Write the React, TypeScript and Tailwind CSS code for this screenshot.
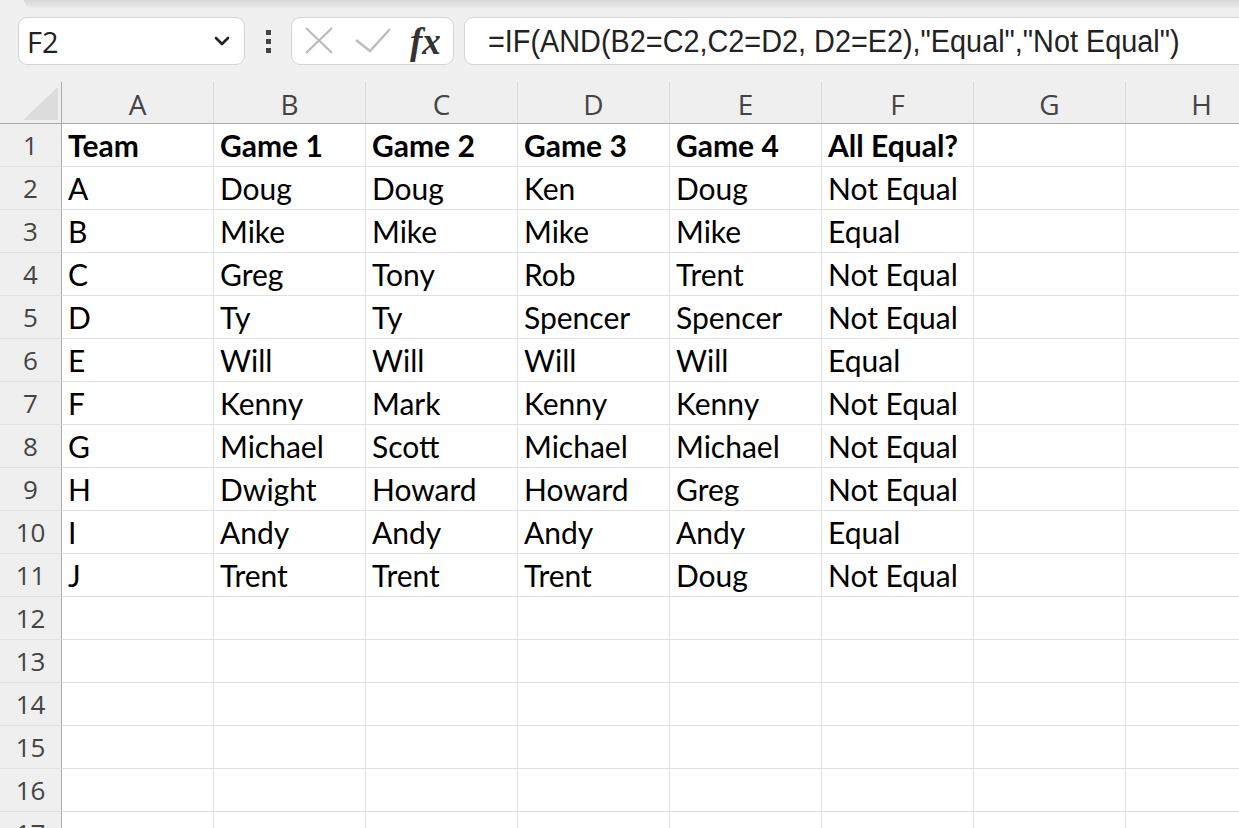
import { ChevronDown } from 'lucide-react';

const COLS = ['A', 'B', 'C', 'D', 'E', 'F', 'G', 'H'];

const DATA: string[][] = [
  ['Team', 'Game 1', 'Game 2', 'Game 3', 'Game 4', 'All Equal?'],
  ['A', 'Doug', 'Doug', 'Ken', 'Doug', 'Not Equal'],
  ['B', 'Mike', 'Mike', 'Mike', 'Mike', 'Equal'],
  ['C', 'Greg', 'Tony', 'Rob', 'Trent', 'Not Equal'],
  ['D', 'Ty', 'Ty', 'Spencer', 'Spencer', 'Not Equal'],
  ['E', 'Will', 'Will', 'Will', 'Will', 'Equal'],
  ['F', 'Kenny', 'Mark', 'Kenny', 'Kenny', 'Not Equal'],
  ['G', 'Michael', 'Scott', 'Michael', 'Michael', 'Not Equal'],
  ['H', 'Dwight', 'Howard', 'Howard', 'Greg', 'Not Equal'],
  ['I', 'Andy', 'Andy', 'Andy', 'Andy', 'Equal'],
  ['J', 'Trent', 'Trent', 'Trent', 'Doug', 'Not Equal'],
];

const ROW_COUNT = 17;

function FormulaBar() {
  return (
    <div className="flex items-center h-[48px] mt-[9px]">
      {/* name box */}
      <div className="ml-[18px] w-[227px] h-full flex items-center justify-between bg-white border border-[#d4d4d4] rounded-[9px] pl-[8px] pr-[10px]">
        <span className="font-['Open_Sans'] text-[29px] text-[#222] leading-none">F2</span>
        <ChevronDown size={24} strokeWidth={2.6} className="text-[#222]" />
      </div>

      {/* splitter dots */}
      <div className="w-[46px] flex flex-col items-center gap-[4px]">
        <span className="w-[5px] h-[5px] bg-[#444]" />
        <span className="w-[5px] h-[5px] bg-[#444]" />
        <span className="w-[5px] h-[5px] bg-[#444]" />
      </div>

      {/* cancel / enter / fx */}
      <div className="w-[163px] h-full flex items-center bg-white border border-[#d4d4d4] rounded-[9px]">
        <svg width="30" height="30" viewBox="0 0 30 30" className="ml-[12px]">
          <path d="M2 2 L28 27 M28 2 L2 27" stroke="#bdbdbd" strokeWidth="2.4" fill="none" />
        </svg>
        <svg width="38" height="26" viewBox="0 0 38 26" className="ml-[20px]">
          <path d="M2 12 L16 23 L36 1" stroke="#bdbdbd" strokeWidth="2.4" fill="none" />
        </svg>
        <span className="ml-[18px] font-['Liberation_Serif'] italic font-bold text-[37px] text-[#333] leading-none">fx</span>
      </div>

      {/* formula input */}
      <div className="ml-[10px] flex-1 -mr-[20px] h-full flex items-center bg-white border border-[#d4d4d4] rounded-[9px] pl-[23px] overflow-hidden">
        <span className="font-['Liberation_Sans'] text-[31px] text-[#222] leading-none whitespace-nowrap origin-left scale-x-[0.93] inline-block">
          =IF(AND(B2=C2,C2=D2, D2=E2),"Equal","Not Equal")
        </span>
      </div>
    </div>
  );
}

function Grid() {
  return (
    <div className="mt-[17px] bg-white">
      {/* column headers */}
      <div className="grid grid-cols-[62px_repeat(8,152px)] h-[42px] bg-[#efefef] border-b border-[#ababab]">
        <div className="relative border-r border-[#ababab]">
          <svg width="36" height="33" viewBox="0 0 36 33" className="absolute left-[23px] top-[5px]">
            <polygon points="0,33 35,0 35,33" fill="#dcdcdc" />
          </svg>
        </div>
        {COLS.map((c) => (
          <div key={c} className="flex items-center justify-center border-r border-[#dcdcdc] font-['Open_Sans'] text-[28px] text-[#444] leading-none pt-[2px]">
            {c}
          </div>
        ))}
      </div>

      {/* rows */}
      {Array.from({ length: ROW_COUNT }).map((_, r) => {
        const row = DATA[r] || [];
        const bold = r === 0;
        return (
          <div key={r} className="grid grid-cols-[62px_repeat(8,152px)] h-[43px]">
            <div className="flex items-end justify-center pb-[3px] bg-[#efefef] border-r border-[#ababab] border-b border-b-[#e2e2e2] font-['Open_Sans'] text-[26px] text-[#444] leading-[1.3]">
              {r + 1}
            </div>
            {COLS.map((c, i) => (
              <div
                key={c}
                className={`flex items-end pl-[6px] pb-[3px] border-r border-b border-[#e1e1e1] font-['Lato'] text-[30px] text-black leading-[1.2] whitespace-nowrap overflow-hidden ${bold ? 'font-bold' : ''}`}
              >
                {row[i] ?? ''}
              </div>
            ))}
          </div>
        );
      })}
    </div>
  );
}

export default function App() {
  return (
    <div className="w-[1239px] h-[828px] overflow-hidden bg-[#f0f0f0]">
      <div className="h-[8px] ml-[24px] rounded-bl-[8px] bg-gradient-to-b from-[#d8d8d8] to-[#ebebeb]" />
      <FormulaBar />
      <Grid />
    </div>
  );
}
